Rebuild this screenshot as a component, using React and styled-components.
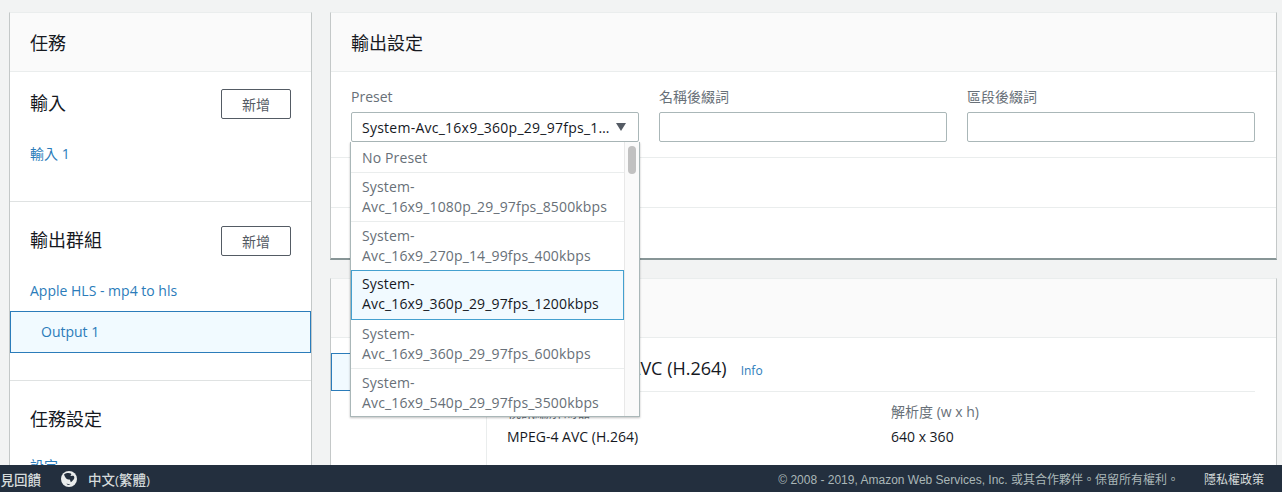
import React from "react";
import styled, { createGlobalStyle } from "styled-components";

const Global = createGlobalStyle`
  html, body { margin: 0; padding: 0; height: 100%; overflow: hidden; }
  body {
    background: #f2f3f3;
    color: #16191f;
    font-family: "Open Sans", "Noto Sans CJK TC", sans-serif;
    font-size: 14px;
  }
`;

const Page = styled.div`
  height: 492px;
  display: flex;
  flex-direction: column;
  overflow: hidden;
`;

const Main = styled.main`
  flex: 1;
  min-height: 0;
  overflow: hidden;
  display: grid;
  grid-template-columns: 303px 947px;
  column-gap: 18px;
  align-items: start;
  padding: 12px 0 0 9px;
`;

const Column = styled.div`
  display: flex;
  flex-direction: column;
  gap: 18px;
`;

const Panel = styled.section`
  background: #fff;
  border: 1px solid #c4c8c8;
  border-top-color: #eaeded;
  border-bottom: ${(p) => (p.$raised ? "2px solid #879596" : "1px solid #c4c8c8")};
`;

const PanelHead = styled.header`
  height: 58px;
  display: flex;
  align-items: center;
  padding: 0 20px;
  background: #fafafa;
  border-bottom: 1px solid #eaeded;
  font-size: 18px;
  font-weight: 400;
`;

const JobSection = styled.div`
  padding: ${(p) => p.$top}px 20px 0;
  height: ${(p) => p.$height}px;
  box-sizing: border-box;
  border-bottom: ${(p) => (p.$last ? "none" : "1px solid #dfe2e2")};
`;

const SectionRow = styled.div`
  display: flex;
  align-items: center;
  justify-content: space-between;
  height: 30px;
`;

const SectionTitle = styled.span`
  font-size: 18px;
  padding-bottom: 4px;
`;

const AddButton = styled.button`
  width: 70px;
  height: 30px;
  background: #fff;
  border: 1px solid #545b64;
  border-radius: 2px;
  font: inherit;
  font-size: 14px;
  color: #545b64;
  padding: 0;
`;

const SideLink = styled.a`
  display: block;
  color: #2b7cba;
  font-size: 14px;
  margin-top: ${(p) => p.$top || 0}px;
  line-height: 18px;
`;

const SelectedLink = styled.a`
  display: flex;
  align-items: center;
  height: 42px;
  box-sizing: border-box;
  margin: 11px -20px 0;
  padding: 0 0 1px 30px;
  background: #f1faff;
  border: 1px solid #2b7cba;
  color: #2b7cba;
  font-size: 14px;
`;

const FormRow = styled.div`
  display: grid;
  grid-template-columns: repeat(3, 288px);
  column-gap: 20px;
  padding: 15px 20px 15px;
  border-bottom: 1px solid #eaeded;
`;

const Field = styled.div`
  position: relative;
`;

const FieldLabel = styled.label`
  display: block;
  height: 25px;
  line-height: 20px;
  font-size: 14px;
  color: #687078;
`;

const Input = styled.div`
  height: 30px;
  box-sizing: border-box;
  background: #fff;
  border: 1px solid #aab7b8;
  border-radius: 2px;
`;

const SelectBox = styled(Input)`
  display: flex;
  align-items: center;
  justify-content: space-between;
  padding: 0 12px 0 10px;
`;

const SelectValue = styled.span`
  white-space: nowrap;
  letter-spacing: 0.25px;
`;

const Caret = styled.span`
  width: 0;
  height: 0;
  border-left: 5.5px solid transparent;
  border-right: 5.5px solid transparent;
  border-top: 8px solid #545b64;
`;

const Dropdown = styled.div`
  position: absolute;
  left: -1px;
  top: 55px;
  width: 290px;
  height: 275px;
  box-sizing: border-box;
  overflow: hidden;
  background: #fff;
  border: 1px solid #aab7b8;
  border-top: none;
  box-shadow: 0 1px 2px rgba(0, 0, 0, 0.25);
  z-index: 5;
`;

const Options = styled.ul`
  list-style: none;
  margin: 0;
  padding: 0;
  width: 273px;
`;

const Option = styled.li`
  box-sizing: border-box;
  padding: ${(p) => (p.$single ? 5 : 3)}px 10px 3px;
  line-height: 20px;
  letter-spacing: 0.15px;
  height: ${(p) => (p.$single ? 31 : p.$active ? 50 : 49)}px;
  margin-top: ${(p) => (p.$active ? -1 : 0)}px;
  color: ${(p) => (p.$active ? "#16191f" : "#687078")};
  background: ${(p) => (p.$active ? "#f1faff" : "#fff")};
  border: 1px solid ${(p) => (p.$active ? "#44a0cf" : "transparent")};
  border-bottom-color: ${(p) => (p.$active ? "#44a0cf" : "#eaeded")};
  border-left-width: ${(p) => (p.$active ? 1 : 0)}px;
  border-right-width: ${(p) => (p.$active ? 1 : 0)}px;
  padding-left: ${(p) => (p.$active ? 10 : 11)}px;
`;

const ScrollTrack = styled.div`
  position: absolute;
  top: 0;
  right: 0;
  width: 15px;
  height: 100%;
  background: #fafafa;
  border-left: 1px solid #e8e8e8;
  box-sizing: border-box;
`;

const ScrollThumb = styled.div`
  margin: 4px 0 0 3px;
  width: 8px;
  height: 28px;
  border-radius: 4px;
  background: #c1c1c1;
`;

const EmptyRow = styled.div`
  height: ${(p) => p.$height}px;
  border-bottom: ${(p) => (p.$line ? "1px solid #eaeded" : "none")};
`;

const VideoBody = styled.div`
  display: grid;
  grid-template-columns: 156px 1fr;
  height: 130px;
`;

const VideoTabs = styled.div`
  border-right: 1px solid #eaeded;
  padding-top: 15px;
`;

const VideoTab = styled.div`
  height: 38px;
  box-sizing: border-box;
  width: 60px;
  background: #f1faff;
  border: 1px solid #2b7cba;
`;

const VideoContent = styled.div`
  padding: 13px 21px 0 20px;
`;

const VideoTitle = styled.div`
  display: flex;
  align-items: baseline;
  gap: 14px;
  height: 41px;
  box-sizing: border-box;
  padding-top: 3px;
  border-bottom: 1px solid #eaeded;
  font-size: 18px;
`;

const InfoLink = styled.a`
  color: #2b7cba;
  font-size: 12px;
`;

const Specs = styled.div`
  display: grid;
  grid-template-columns: 384px 1fr;
  padding-top: 10px;
`;

const SpecLabel = styled.div`
  color: #687078;
  line-height: 20px;
`;

const SpecValue = styled.div`
  line-height: 20px;
  margin-top: 5px;
`;

const Footer = styled.footer`
  height: 27px;
  flex: none;
  display: flex;
  align-items: center;
  background: #232f3e;
  color: #d5dbdb;
  font-size: 12px;
  white-space: nowrap;
  overflow: hidden;
`;

const Feedback = styled.span`
  margin-left: -13px;
  font-size: 13.5px;
  font-weight: 500;
`;

const Globe = styled.svg`
  width: 16px;
  height: 16px;
  margin-left: 20px;
`;

const Language = styled.span`
  margin-left: 11px;
  font-size: 13.5px;
  font-weight: 500;
`;

const Copyright = styled.span`
  margin-left: auto;
  color: #aab7b8;
  font-family: "Liberation Sans", "Noto Sans CJK TC", sans-serif;
`;

const Privacy = styled.span`
  margin: 0 18px 0 25px;
`;

const options = [
  "System-Avc_16x9_1080p_29_97fps_8500kbps",
  "System-Avc_16x9_270p_14_99fps_400kbps",
  "System-Avc_16x9_360p_29_97fps_1200kbps",
  "System-Avc_16x9_360p_29_97fps_600kbps",
  "System-Avc_16x9_540p_29_97fps_3500kbps",
];

const App = () => (
  <Page>
    <Global />
    <Main>
      <Panel>
        <PanelHead>任務</PanelHead>
        <JobSection $top={17} $height={130}>
          <SectionRow>
            <SectionTitle>輸入</SectionTitle>
            <AddButton>新增</AddButton>
          </SectionRow>
          <SideLink $top={26}>輸入 1</SideLink>
        </JobSection>
        <JobSection $top={24} $height={179}>
          <SectionRow>
            <SectionTitle>輸出群組</SectionTitle>
            <AddButton>新增</AddButton>
          </SectionRow>
          <SideLink $top={26}>Apple HLS - mp4 to hls</SideLink>
          <SelectedLink>Output 1</SelectedLink>
        </JobSection>
        <JobSection $top={24} $height={100} $last>
          <SectionRow>
            <SectionTitle>任務設定</SectionTitle>
          </SectionRow>
          <SideLink $top={22}>設定</SideLink>
        </JobSection>
      </Panel>
      <Column>
        <Panel $raised>
          <PanelHead>輸出設定</PanelHead>
          <FormRow>
            <Field>
              <FieldLabel>Preset</FieldLabel>
              <SelectBox>
                <SelectValue>System-Avc_16x9_360p_29_97fps_1…</SelectValue>
                <Caret />
              </SelectBox>
              <Dropdown>
                <Options>
                  <Option $single>No Preset</Option>
                  {options.map((name, i) => (
                    <Option key={name} $active={i === 2}>
                      {name.slice(0, 7)}
                      <br />
                      {name.slice(7)}
                    </Option>
                  ))}
                </Options>
                <ScrollTrack>
                  <ScrollThumb />
                </ScrollTrack>
              </Dropdown>
            </Field>
            <Field>
              <FieldLabel>名稱後綴詞</FieldLabel>
              <Input />
            </Field>
            <Field>
              <FieldLabel>區段後綴詞</FieldLabel>
              <Input />
            </Field>
          </FormRow>
          <EmptyRow $height={49} $line />
          <EmptyRow $height={50} />
        </Panel>
        <Panel>
          <PanelHead />
          <VideoBody>
            <VideoTabs>
              <VideoTab />
            </VideoTabs>
            <VideoContent>
              <VideoTitle>
                編碼 - MPEG-4 AVC (H.264)
                <InfoLink>Info</InfoLink>
              </VideoTitle>
              <Specs>
                <div>
                  <SpecLabel>視訊編解碼器</SpecLabel>
                  <SpecValue>MPEG-4 AVC (H.264)</SpecValue>
                </div>
                <div>
                  <SpecLabel>解析度 (w x h)</SpecLabel>
                  <SpecValue>640 x 360</SpecValue>
                </div>
              </Specs>
            </VideoContent>
          </VideoBody>
        </Panel>
      </Column>
    </Main>
    <Footer>
      <Feedback>意見回饋</Feedback>
      <Globe viewBox="0 0 16 16">
        <circle cx="8" cy="8" r="8" fill="#eaeded" />
        <path
          d="M3 3.5C5 2 8 1.6 10 2.6c.6 1 .2 1.8-.6 2.2.8.5 2.6-.4 3.6.4.6 1.2.4 2.6-.6 3.6-1 1-1.6 2.2-2.6 2.4-.6-1-.4-2-1.2-2.6-1.4 0-3-.4-3.8-1.6C4 5.800 3.400 4.800 3 3.500zM5.500 12.500c1 .4 2.600.8 3.800.6-.6.8-1.800 1-2.600.7-.6-.2-1-.7-1.200-1.300z"
          fill="#232f3e"
        />
      </Globe>
      <Language>中文(繁體)</Language>
      <Copyright>© 2008 - 2019, Amazon Web Services, Inc. 或其合作夥伴。保留所有權利。</Copyright>
      <Privacy>隱私權政策</Privacy>
    </Footer>
  </Page>
);

export default App;
